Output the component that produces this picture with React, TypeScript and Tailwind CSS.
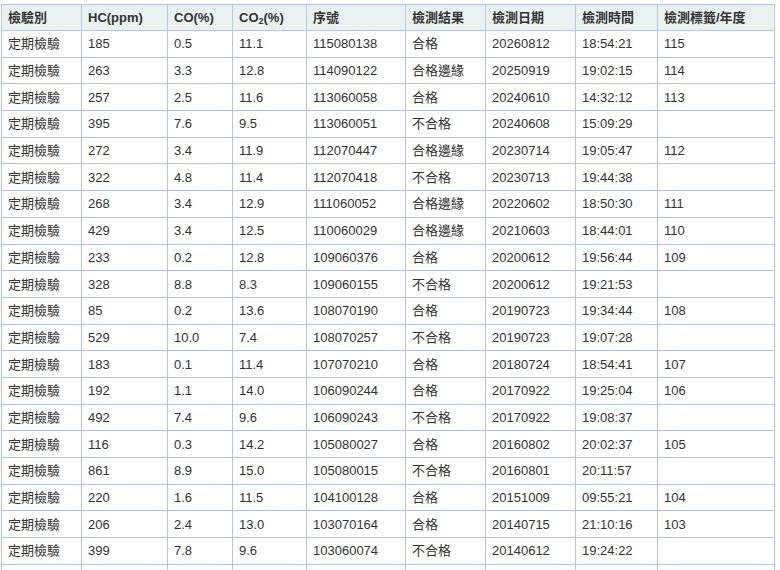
import React from "react";

const rows: string[][] = [
  ["定期檢驗", "185", "0.5", "11.1", "115080138", "合格", "20260812", "18:54:21", "115"],
  ["定期檢驗", "263", "3.3", "12.8", "114090122", "合格邊緣", "20250919", "19:02:15", "114"],
  ["定期檢驗", "257", "2.5", "11.6", "113060058", "合格", "20240610", "14:32:12", "113"],
  ["定期檢驗", "395", "7.6", "9.5", "113060051", "不合格", "20240608", "15:09:29", ""],
  ["定期檢驗", "272", "3.4", "11.9", "112070447", "合格邊緣", "20230714", "19:05:47", "112"],
  ["定期檢驗", "322", "4.8", "11.4", "112070418", "不合格", "20230713", "19:44:38", ""],
  ["定期檢驗", "268", "3.4", "12.9", "111060052", "合格邊緣", "20220602", "18:50:30", "111"],
  ["定期檢驗", "429", "3.4", "12.5", "110060029", "合格邊緣", "20210603", "18:44:01", "110"],
  ["定期檢驗", "233", "0.2", "12.8", "109060376", "合格", "20200612", "19:56:44", "109"],
  ["定期檢驗", "328", "8.8", "8.3", "109060155", "不合格", "20200612", "19:21:53", ""],
  ["定期檢驗", "85", "0.2", "13.6", "108070190", "合格", "20190723", "19:34:44", "108"],
  ["定期檢驗", "529", "10.0", "7.4", "108070257", "不合格", "20190723", "19:07:28", ""],
  ["定期檢驗", "183", "0.1", "11.4", "107070210", "合格", "20180724", "18:54:41", "107"],
  ["定期檢驗", "192", "1.1", "14.0", "106090244", "合格", "20170922", "19:25:04", "106"],
  ["定期檢驗", "492", "7.4", "9.6", "106090243", "不合格", "20170922", "19:08:37", ""],
  ["定期檢驗", "116", "0.3", "14.2", "105080027", "合格", "20160802", "20:02:37", "105"],
  ["定期檢驗", "861", "8.9", "15.0", "105080015", "不合格", "20160801", "20:11:57", ""],
  ["定期檢驗", "220", "1.6", "11.5", "104100128", "合格", "20151009", "09:55:21", "104"],
  ["定期檢驗", "206", "2.4", "13.0", "103070164", "合格", "20140715", "21:10:16", "103"],
  ["定期檢驗", "399", "7.8", "9.6", "103060074", "不合格", "20140612", "19:24:22", ""],
  ["", "", "", "", "", "", "", "", ""],
];

const widths = [80, 86, 65, 74, 99, 80, 90, 82, 117];

export default function App() {
  return (
    <div
      className="w-[780px] h-[570px] overflow-hidden bg-white pl-px pt-[4px] text-[#333]"
      style={{ fontFamily: '"Liberation Sans", Arial, "Noto Sans CJK TC", sans-serif' }}
    >
      <table className="table-fixed border-collapse w-[774px] text-[13px] leading-none">
        <colgroup>
          {widths.map((w, i) => (
            <col key={i} style={{ width: w }} />
          ))}
        </colgroup>
        <thead>
          <tr className="h-[26px] bg-[#e8f1f0]">
            {[
              "檢驗別",
              "HC(ppm)",
              "CO(%)",
              null,
              "序號",
              "檢測結果",
              "檢測日期",
              "檢測時間",
              "檢測標籤/年度",
            ].map((h, i) => (
              <th
                key={i}
                className="border border-[#b3c8e3] pl-[6px] text-left font-bold align-middle"
              >
                {h === null ? (
                  <span>
                    CO<sub className="text-[9px]">2</sub>(%)
                  </span>
                ) : (
                  h
                )}
              </th>
            ))}
          </tr>
        </thead>
        <tbody>
          {rows.map((r, ri) => (
            <tr key={ri} className="h-[26.7px]">
              {r.map((c, ci) => (
                <td
                  key={ci}
                  className="border border-[#b3c8e3] pl-[6px] align-middle whitespace-nowrap"
                >
                  {c}
                </td>
              ))}
            </tr>
          ))}
        </tbody>
      </table>
    </div>
  );
}
